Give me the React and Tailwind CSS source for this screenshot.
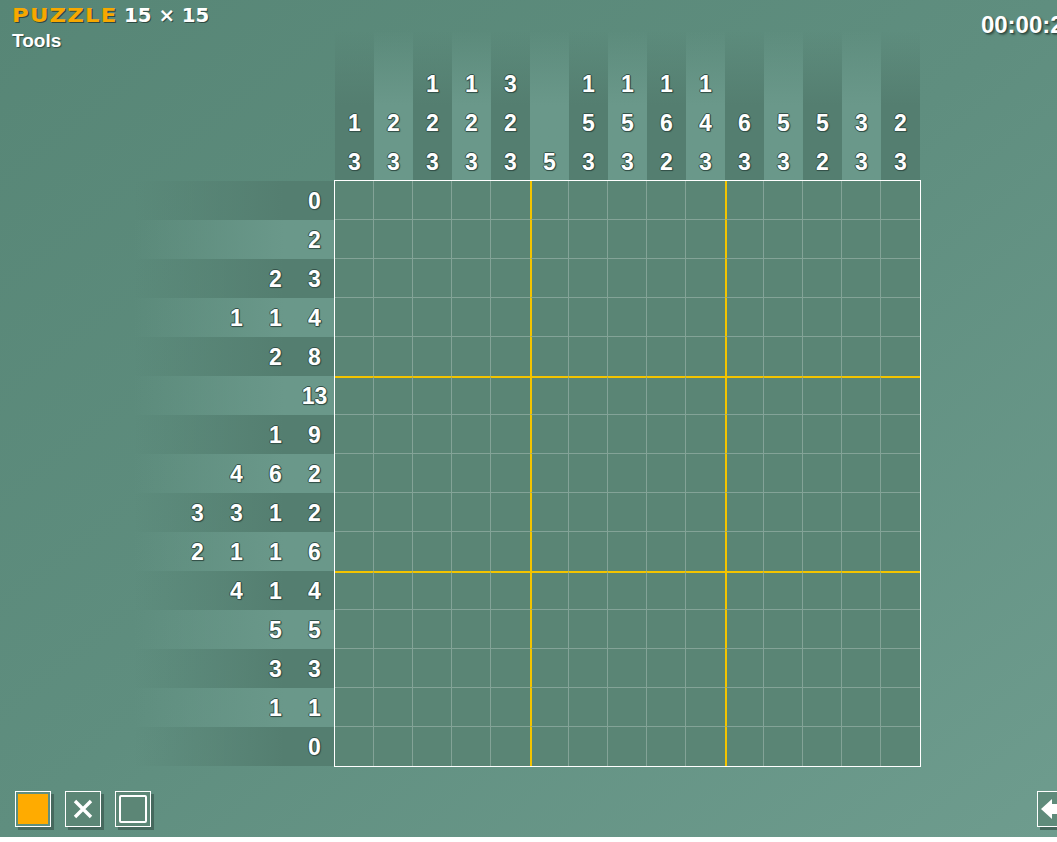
import React from "react";

const COLS = [
  [1, 3], [2, 3], [1, 2, 3], [1, 2, 3], [3, 2, 3],
  [5], [1, 5, 3], [1, 5, 3], [1, 6, 2], [1, 4, 3],
  [6, 3], [5, 3], [5, 2], [3, 3], [2, 3],
];

const ROWS = [
  [0], [2], [2, 3], [1, 1, 4], [2, 8],
  [13], [1, 9], [4, 6, 2], [3, 3, 1, 2], [2, 1, 1, 6],
  [4, 1, 4], [5, 5], [3, 3], [1, 1], [0],
];

const num =
  "text-white font-bold text-[23px] leading-none font-['Liberation_Sans',Arial,sans-serif] [text-shadow:1px_0_0_#34524a,-1px_0_0_#34524a,0_1px_0_#34524a,0_-1px_0_#34524a,1px_1px_1px_#2c4740]";

const Clue = ({ n, top }) => (
  <div
    className={`w-[39px] h-[39px] flex items-center justify-center ${top ? "pt-[4px]" : "pt-[2px]"} ${num}`}
  >
    {n}
  </div>
);

const Cell = ({ r, c }) => {
  const right = c === 14 || c === 4 || c === 9 ? "" : "border-r border-r-white/25";
  const left = c === 5 || c === 10 ? "border-l-2 border-l-[#f4c400]" : "";
  const bottom = r === 14 || r === 4 || r === 9 ? "" : "border-b border-b-white/25";
  const top = r === 5 || r === 10 ? "border-t-2 border-t-[#f4c400]" : "";
  return <div className={`${right} ${left} ${bottom} ${top}`} />;
};

export default function App() {
  return (
    <div className="w-full h-[837px] overflow-hidden bg-linear-to-br from-[#578676] via-[#5f8e7f] to-[#6e9c8e] flex flex-col">
      {/* HEADER */}
      <div className="h-[30px] flex justify-between relative z-10">
        <div className="pl-[12px] pt-[6px]">
          <div className="flex items-center h-[18px] font-['DejaVu_Sans',sans-serif] font-bold text-[19px] leading-none [text-shadow:1px_1px_0_#2f4a42]">
            <span className="inline-block origin-left scale-x-[1.2] text-[#f7a800] tracking-[1px]">PUZZLE</span>
            <span className="inline-block origin-left scale-x-[1.04] text-white ml-[24px]">15 × 15</span>
          </div>
          <div className="mt-[7px] text-white font-bold text-[19px] leading-none font-['Liberation_Sans',Arial,sans-serif] [text-shadow:1px_1px_1px_#2f4a42]">
            Tools
          </div>
        </div>
        <div className="pt-[13px] -mr-[20px] text-white font-bold text-[24px] leading-none font-['Liberation_Sans',Arial,sans-serif] [text-shadow:1px_1px_1px_#2f4a42,2px_2px_2px_#3f5f55]">
          00:00:21
        </div>
      </div>

      {/* PUZZLE */}
      <div className="grid grid-cols-[334px_587px] grid-rows-[150px_587px]">
        <div />
        <div className="flex pl-px">
          {COLS.map((col, i) => (
            <div
              key={i}
              className={`w-[39px] flex flex-col justify-end ${
                i % 2 === 0
                  ? "bg-linear-to-b from-transparent to-[#547e70] to-50%"
                  : "bg-linear-to-b from-transparent to-[#6a988a] to-50%"
              }`}
            >
              {col.map((n, j) => (
                <Clue key={j} n={n} top />
              ))}
            </div>
          ))}
        </div>

        <div className="flex flex-col pt-px">
          {ROWS.map((row, i) => (
            <div
              key={i}
              className={`h-[39px] flex justify-end ${
                i % 2 === 0
                  ? "bg-linear-to-r from-transparent from-40% to-[#547e70] to-85%"
                  : "bg-linear-to-r from-transparent from-40% to-[#6a988a] to-85%"
              }`}
            >
              {row.map((n, j) => (
                <Clue key={j} n={n} />
              ))}
            </div>
          ))}
        </div>
        <div className="border border-white bg-[#5a8575] grid grid-cols-[repeat(15,39px)] grid-rows-[repeat(15,39px)]">
          {ROWS.map((_, r) =>
            COLS.map((_, c) => <Cell key={`${r}-${c}`} r={r} c={c} />)
          )}
        </div>
      </div>

      {/* TOOLBAR */}
      <div className="mt-[24px] flex items-center pl-[15px] -mr-[16px]">
        <div className="flex gap-[14px]">
          <button className="w-[36px] h-[36px] border border-white p-[2px] shadow-[3px_3px_0_#46695e]">
            <div className="w-full h-full bg-[#ffab00]" />
          </button>
          <button className="w-[36px] h-[36px] border border-white bg-[#5c8676] flex items-center justify-center shadow-[3px_3px_0_#46695e]">
            <svg width="22" height="22" viewBox="0 0 22 22">
              <path d="M3 3 L19 19 M19 3 L3 19" stroke="white" strokeWidth="3.4" />
            </svg>
          </button>
          <button className="w-[36px] h-[36px] border border-white bg-[#5c8676] flex items-center justify-center shadow-[3px_3px_0_#46695e]">
            <div className="w-[28px] h-[28px] border-2 border-white rounded-[2px]" />
          </button>
        </div>
        <button className="ml-auto w-[36px] h-[36px] border border-white bg-[#5f8b7b] flex items-center justify-start pl-[2px] shadow-[3px_3px_0_#46695e]">
          <svg width="30" height="22" viewBox="0 0 30 22">
            <path d="M1 11 L12 1 L12 6 L29 6 L29 16 L12 16 L12 21 Z" fill="white" />
          </svg>
        </button>
      </div>
    </div>
  );
}
